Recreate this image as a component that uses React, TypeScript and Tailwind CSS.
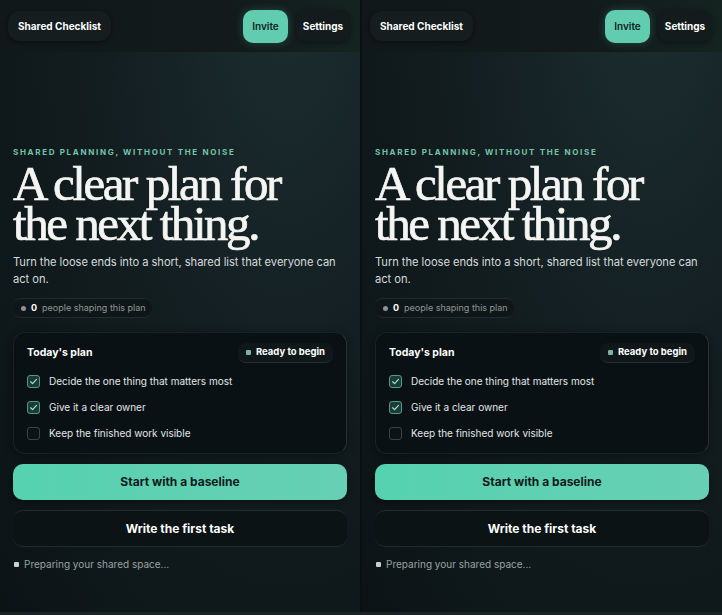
import React from "react";

const font = { fontFamily: 'Inter, "Noto Sans", sans-serif' };

function Check() {
  return (
    <span className="flex h-[13px] w-[13px] items-center justify-center rounded-[3px] border border-[#4f9c89] bg-[#1c3b37]">
      <svg width="9" height="9" viewBox="0 0 10 10" fill="none">
        <path d="M1.8 5.3 L4 7.4 L8.3 2.6" stroke="#a5e3d0" strokeWidth="1.3" strokeLinecap="round" strokeLinejoin="round" />
      </svg>
    </span>
  );
}

function Empty() {
  return <span className="h-[13px] w-[13px] rounded-[3px] border border-[#3a4446] bg-[#0c1315]" />;
}

function Panel() {
  return (
    <div className="flex h-[612px] w-[360px] flex-col bg-[radial-gradient(ellipse_at_80%_0%,#1c2d2f_0%,#131e21_45%,#0b1315_100%)]">
      <header className="flex h-[52px] shrink-0 items-center justify-between bg-[linear-gradient(90deg,#111819_0%,#121a1b_60%,#142320_100%)] pl-2 pr-[10px]">
        <div className="flex h-[30px] items-center rounded-xl bg-[#151d1f] px-[10px] text-[10px] font-bold text-white shadow-[0_1px_4px_rgba(0,0,0,0.4)]">
          Shared Checklist
        </div>
        <div className="flex items-center gap-2">
          <button className="h-[33px] w-[45px] rounded-[10px] bg-[#62ccb0] text-[10px] font-semibold text-[#0f1e1b] shadow-[0_0_8px_rgba(98,204,176,0.25)]">
            Invite
          </button>
          <button className="h-[32px] w-[54px] rounded-[10px] bg-[#131b1c] text-[10px] font-bold text-white shadow-[0_1px_4px_rgba(0,0,0,0.4)]">
            Settings
          </button>
        </div>
      </header>
      <main className="flex flex-col px-[13px] pt-[95px]">
        <div className="text-[8px] font-bold leading-[10px] tracking-[0.21em] text-[#74c3aa]">
          SHARED PLANNING, WITHOUT THE NOISE
        </div>
        <h1
          className="mt-[7px] text-[49px] font-normal leading-[40px] tracking-[-0.05em] text-[#f4f5f2] [-webkit-text-stroke:0.7px_#f4f5f2]"
          style={{ fontFamily: '"Liberation Serif", "DejaVu Serif", serif' }}
        >
          A clear plan for
          <br />
          the next thing.
        </h1>
        <p className="mt-[10px] text-[11.2px] leading-[17px] tracking-[-0.005em] text-[#d4dada]">
          Turn the loose ends into a short, shared list that everyone can act on.
        </p>
        <div className="mt-[10px] flex h-5 w-fit items-center gap-[5px] rounded-lg border-y border-[#222b2d] bg-[#0f1618] pl-[8px] pr-[6px] text-[9px]">
          <span className="h-[5px] w-[5px] rounded-full bg-[#8a9496]" />
          <span className="font-bold text-white">0</span>
          <span className="text-[#8e9899]">people shaping this plan</span>
        </div>
        <section className="mt-[14px] rounded-xl border border-[#1a2224] border-r-[#283133] bg-[#0a1114] pb-3 pl-[13px] pr-[13px] pt-[10px] shadow-[0_2px_8px_rgba(0,0,0,0.4)]">
          <div className="flex h-5 items-center justify-between">
            <span className="text-[10.5px] font-bold text-white">Today's plan</span>
            <span className="flex h-5 items-center gap-[5px] rounded-lg border-b border-[#252e30] bg-[#0f1719] px-2 text-[9.5px] font-bold text-white">
              <span className="h-[5px] w-[5px] rounded-[1px] bg-[#78b6a3]" />
              Ready to begin
            </span>
          </div>
          <ul className="mt-[10px] flex flex-col gap-[10px]">
            {[
              ["Decide the one thing that matters most", true],
              ["Give it a clear owner", true],
              ["Keep the finished work visible", false],
            ].map(([t, c]) => (
              <li key={t as string} className="flex h-4 items-center gap-[9px] text-[10px] text-[#e2e7e6]">
                {c ? <Check /> : <Empty />}
                {t}
              </li>
            ))}
          </ul>
        </section>
        <button className="mt-[10px] h-9 rounded-[10px] bg-[linear-gradient(90deg,#56d2b0,#67cfb5)] text-[12px] font-bold text-[#0f1b19] shadow-[0_2px_6px_rgba(0,0,0,0.4)]">
          Start with a baseline
        </button>
        <button className="mt-[10px] h-[37px] rounded-[10px] border-y border-[#232b2d] bg-[#0c1315] text-[12px] font-bold text-white">
          Write the first task
        </button>
        <div className="mt-[10px] flex h-[14px] items-center gap-[5px] pl-[1px] text-[10px] text-[#9aa3a4]">
          <span className="h-[5px] w-[5px] rounded-[1px] bg-[#c9cfd0]" />
          Preparing your shared space...
        </div>
      </main>
    </div>
  );
}

export default function App() {
  return (
    <div className="flex h-[615px] w-[722px] flex-col bg-[#0a1011]" style={font}>
      <div className="flex">
        <Panel />
        <div className="w-[2px] bg-[#0a1011]" />
        <Panel />
      </div>
      <div className="h-[3px] bg-[#1b2325]" />
    </div>
  );
}
